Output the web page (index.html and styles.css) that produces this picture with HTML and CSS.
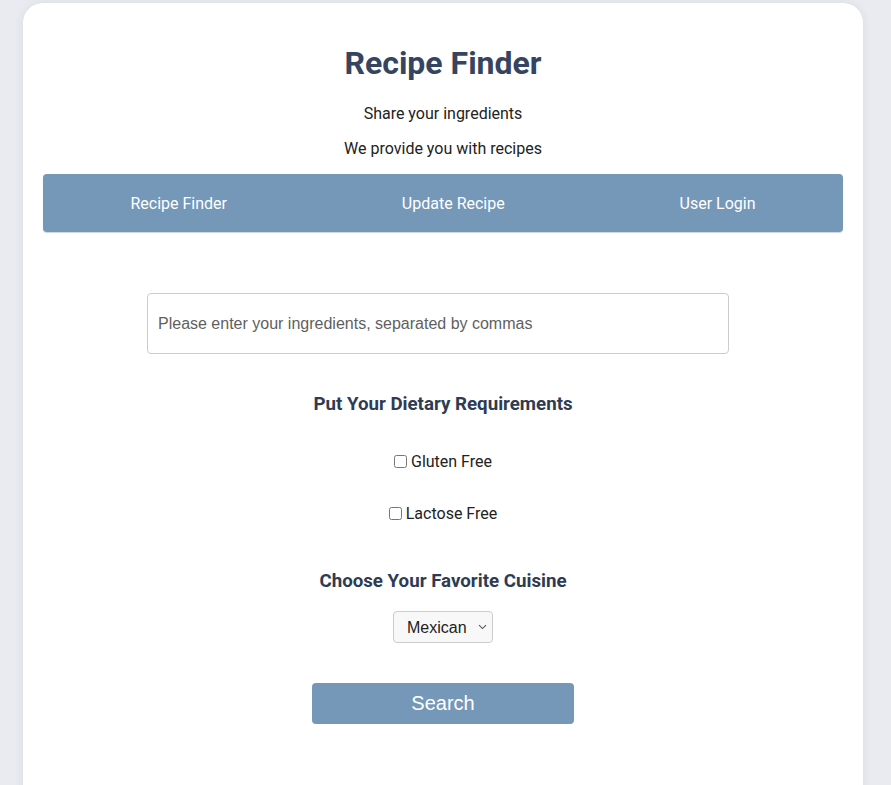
FILE: index.html
```html
<!DOCTYPE html>
<html lang="en">
<head>
<meta charset="utf-8">
<title>Recipe Finder</title>
<link rel="stylesheet" href="styles.css">
</head>
<body>
<div class="page">
  <div class="card">
    <header class="header">
      <h1 class="title">Recipe Finder</h1>
      <p class="subtitle">Share your ingredients</p>
      <p class="subtitle">We provide you with recipes</p>
    </header>
    <nav class="nav">
      <a class="nav-link" href="#">Recipe Finder</a>
      <a class="nav-link" href="#">Update Recipe</a>
      <a class="nav-link" href="#">User Login</a>
    </nav>
    <form class="form">
      <input class="ingredients" type="text" placeholder="Please enter your ingredients, separated by commas">
      <h3 class="section-title first">Put Your Dietary Requirements</h3>
      <label class="check check-1"><input type="checkbox" class="box"> Gluten Free</label>
      <label class="check check-2"><input type="checkbox" class="box"> Lactose Free</label>
      <h3 class="section-title second">Choose Your Favorite Cuisine</h3>
      <span class="select-wrap">
        <select class="cuisine">
          <option>Mexican</option>
          <option>Italian</option>
          <option>Chinese</option>
          <option>Indian</option>
        </select>
        <svg class="chevron" width="9" height="6" viewBox="0 0 9 6"><path d="M1 1.2 L4.5 4.6 L8 1.2" fill="none" stroke="#555" stroke-width="1.1"/></svg>
      </span>
      <button type="button" class="search">Search</button>
    </form>
  </div>
</div>
</body>
</html>
```

FILE: styles.css
```css
* { box-sizing: border-box; }

html, body {
  margin: 0;
  padding: 0;
  background: #e9ebf0;
  font-family: Roboto, "Liberation Sans", Arial, sans-serif;
  height: 785px;
  overflow: hidden;
}

.page {
  padding: 3px 0 0 23px;
}

.card {
  width: 840px;
  min-height: 900px;
  background: #ffffff;
  border-radius: 20px;
  padding: 20px;
  box-shadow: 0 0 10px rgba(40, 50, 70, 0.08);
}

.header {
  text-align: center;
}

.title {
  margin: 21px 0 0;
  font-size: 32px;
  line-height: 38px;
  font-weight: 700;
  color: #354460;
}

.subtitle {
  margin: 0;
  font-size: 16px;
  line-height: 19px;
  color: #222222;
}

.title + .subtitle {
  margin-top: 22px;
}

.subtitle + .subtitle {
  margin-top: 16px;
}

.nav {
  margin-top: 16px;
  height: 58px;
  background: #7597b8;
  border-radius: 4px;
  display: flex;
  justify-content: space-around;
  align-items: center;
  box-shadow: 0 1px 1px rgba(60, 80, 110, 0.25);
}

.nav-link {
  color: #ffffff;
  text-decoration: none;
  font-size: 16px;
  line-height: 19px;
}

.form {
  display: flex;
  flex-direction: column;
  align-items: center;
}

.ingredients {
  margin: 61px 10px 0 0;
  width: 582px;
  height: 61px;
  padding: 0 10px;
  border: 1px solid #cccccc;
  border-radius: 4px;
  font-family: "Liberation Sans", Arial, sans-serif;
  font-size: 16px;
  color: #222;
  outline: none;
}

.ingredients::placeholder {
  color: #5f5f5f;
}

.section-title {
  margin: 0;
  font-size: 18.72px;
  line-height: 22px;
  font-weight: 700;
  color: #2e3b53;
}

.section-title.first { margin-top: 39px; }
.section-title.second { margin-top: 47px; }

.check {
  display: flex;
  align-items: center;
  font-size: 16px;
  line-height: 19px;
  color: #222222;
}

.check-1 { margin-top: 37px; }
.check-2 { margin-top: 33px; }

.box {
  width: 13px;
  height: 13px;
  margin: 0 4px 0 0;
}

.select-wrap {
  position: relative;
  margin-top: 19px;
  display: inline-block;
}

.cuisine {
  appearance: none;
  -webkit-appearance: none;
  width: 100px;
  height: 32px;
  padding: 0 0 0 13px;
  border: 1px solid #cccccc;
  border-radius: 4px;
  background: #f8f8f8;
  font-family: "Liberation Sans", Arial, sans-serif;
  font-size: 16px;
  color: #222222;
}

.chevron {
  position: absolute;
  right: 6px;
  top: 13px;
  pointer-events: none;
}

.search {
  margin-top: 40px;
  width: 262px;
  height: 41px;
  border: none;
  border-radius: 4px;
  background: #7597b8;
  color: #ffffff;
  font-family: "Liberation Sans", Arial, sans-serif;
  font-size: 20px;
  cursor: pointer;
}
```
